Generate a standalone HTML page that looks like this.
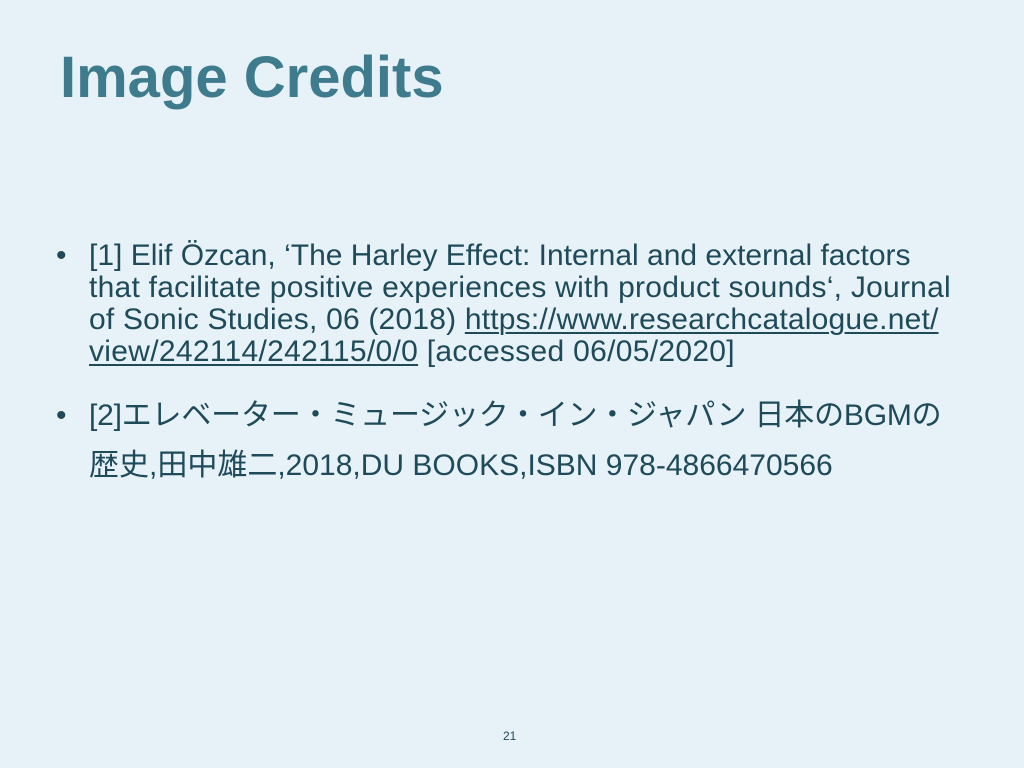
<!DOCTYPE html>
<html><head><meta charset="utf-8"><style>
body{margin:0;width:1024px;height:768px;background:#e7f1f8;overflow:hidden;position:relative;font-family:"Liberation Sans","Noto Sans CJK JP",sans-serif;}
.t{position:absolute;left:60px;top:44px;font-size:58px;font-weight:bold;color:#3e7b8d;white-space:nowrap;}
.l{position:absolute;left:89px;font-size:30px;line-height:32px;color:#1e4a59;white-space:nowrap;}
.b{position:absolute;left:56px;font-size:30px;line-height:32px;color:#1e4a59;}
u{text-decoration-thickness:1.5px;text-underline-offset:3px;}
.n{position:absolute;left:503px;top:729px;font-size:12px;color:#1e4a59;}
</style></head><body>
<div class="t">Image Credits</div>
<div class="b" style="top:240px">•</div>
<div class="l" style="top:240px">[1] Elif Özcan, ‘The Harley Effect: Internal and external factors</div>
<div class="l" style="top:272px;letter-spacing:0.25px">that facilitate positive experiences with product sounds‘, Journal</div>
<div class="l" style="top:304px;letter-spacing:0.2px">of Sonic Studies, 06 (2018) <u>https://www.researchcatalogue.net/</u></div>
<div class="l" style="top:336px;letter-spacing:0.3px"><u>view/242114/242115/0/0</u> [accessed 06/05/2020]</div>
<div class="b" style="top:400px">•</div>
<div class="l" style="top:400px;letter-spacing:-0.2px">[2]エレベーター・ミュージック・イン・ジャパン 日本のBGMの</div>
<div class="l" style="top:450px">歴史,田中雄二,2018,DU BOOKS,ISBN 978-4866470566</div>
<div class="n">21</div>
</body></html>
